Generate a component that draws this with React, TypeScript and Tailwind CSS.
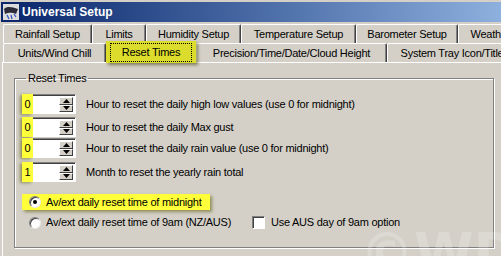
import React from 'react'

const row1 = [
  { label: 'Rainfall Setup', w: 89 },
  { label: 'Limits', w: 54 },
  { label: 'Humidity Setup', w: 95 },
  { label: 'Temperature Setup', w: 115 },
  { label: 'Barometer Setup', w: 102 },
  { label: 'Weather Station', w: 100 },
]

const spinners = [
  { value: '0', label: 'Hour to reset the daily high low values (use 0 for midnight)', mt: 'mt-[10px]' },
  { value: '0', label: 'Hour to reset the daily Max gust', mt: 'mt-[3px]' },
  { value: '0', label: 'Hour to reset the daily rain value (use 0 for midnight)', mt: 'mt-[1px]' },
  { value: '1', label: 'Month to reset the yearly rain total', mt: 'mt-[4px]' },
]

const Tab = ({ label, w }: { label: string; w: number }) => (
  <div
    className="h-[19px] shrink-0 flex items-center justify-center border-l border-t border-white border-r border-r-[#404040] rounded-t-[2px] shadow-[inset_-1px_0_0_#808080] whitespace-nowrap overflow-hidden"
    style={{ width: w }}
  >
    {label}
  </div>
)

const SpinBox = ({ value }: { value: string }) => (
  <div className="relative w-[54px] h-[20px] shrink-0 bg-white border border-t-[#808080] border-l-[#808080] border-b-white border-r-white shadow-[inset_1px_1px_0_#404040]">
    <div className="absolute -left-[1px] -top-[1px] w-[11px] h-[20px] bg-[#ffff3a] shadow-[-2px_1px_3px_rgba(90,90,0,0.55)] flex items-center justify-center">
      {value}
    </div>
    <div className="absolute right-[2px] top-[2px] w-[14px] h-[15px] flex flex-col">
      <div className="flex-1 bg-[#d4d0c8] border border-t-white border-l-white border-b-[#404040] border-r-[#404040] flex items-center justify-center">
        <svg width="7" height="4" viewBox="0 0 7 4"><path d="M3.5 0L7 4H0z" fill="#000" /></svg>
      </div>
      <div className="flex-1 bg-[#d4d0c8] border border-t-white border-l-white border-b-[#404040] border-r-[#404040] flex items-center justify-center">
        <svg width="7" height="4" viewBox="0 0 7 4"><path d="M0 0H7L3.5 4z" fill="#000" /></svg>
      </div>
    </div>
  </div>
)

const Radio = ({ checked }: { checked?: boolean }) => (
  <span className="w-[12px] h-[12px] shrink-0 rounded-full bg-white border border-t-[#808080] border-l-[#808080] border-b-[#e8e8e8] border-r-[#e8e8e8] shadow-[inset_1px_1px_0_#404040] flex items-center justify-center">
    {checked && <span className="w-[4px] h-[4px] rounded-full bg-black" />}
  </span>
)

export default function App() {
  return (
    <div
      className="relative w-[501px] h-[256px] overflow-hidden bg-[#d4d0c8] text-black text-[11px] leading-none tracking-[-0.25px] whitespace-nowrap"
      style={{ fontFamily: '"Liberation Sans", Arial, sans-serif' }}
    >
      {/* title bar */}
      <div className="mt-[2px] ml-[1px] h-[20px] bg-gradient-to-r from-[#0a246a] to-[#8eb0de] flex items-center gap-[3px] pl-[2px]">
        <svg width="16" height="16" viewBox="0 0 16 16">
          <rect width="16" height="16" fill="#dcdcdc" />
          <path d="M1 5C4 2 9 3 15 5L13 10C9 8 5 9 2 10z" fill="#2b2b3a" />
          <path d="M4 11l2 4M8 11l1 4M11 10l2 3" stroke="#3050c0" strokeWidth="1.2" />
        </svg>
        <span className="text-white font-bold text-[12px] tracking-normal">Universal Setup</span>
      </div>

      {/* tabs */}
      <div className="mt-[2px] pl-[3px] flex">
        {row1.map((t) => (
          <Tab key={t.label} label={t.label} w={t.w} />
        ))}
      </div>
      <div className="relative pl-[3px] flex h-[19px]">
        <Tab label="Units/Wind Chill" w={103} />
        <div className="relative z-10 -mt-[2px] w-[90px] h-[22px] shrink-0 bg-[#dcdc2c] shadow-[2px_2px_3px_rgba(60,60,0,0.55)] flex items-center justify-center">
          <span className="px-[11px] py-[3px] border border-dotted border-black">Reset Times</span>
        </div>
        <Tab label="Precision/Time/Date/Cloud Height" w={191} />
        <Tab label="System Tray Icon/Title" w={130} />
      </div>

      {/* page */}
      <div className="relative ml-[2px] h-[200px] border-t border-l border-white pl-[11px] pt-[10px]">
        <fieldset className="w-[480px] h-[175px] border border-[#808080] shadow-[inset_1px_1px_0_white,1px_1px_0_white] px-[7px]">
          <legend className="ml-[4px] px-[2px]">Reset Times</legend>
          {spinners.map((s, i) => (
            <div key={i} className={`${s.mt} flex items-center gap-[10px]`}>
              <SpinBox value={s.value} />
              <span>{s.label}</span>
            </div>
          ))}

          <div className="mt-[12px] w-[188px] h-[16px] bg-[#ffff3a] shadow-[2px_2px_3px_rgba(90,90,0,0.55)] flex items-center gap-[5px] pl-[7px]">
            <Radio checked />
            <span>Av/ext daily reset time of midnight</span>
          </div>

          <div className="mt-[6px] flex items-center">
            <div className="flex items-center gap-[5px] pl-[7px] w-[230px]">
              <Radio />
              <span>Av/ext daily reset time of 9am (NZ/AUS)</span>
            </div>
            <div className="flex items-center gap-[6px]">
              <span className="w-[13px] h-[13px] bg-white border border-t-[#808080] border-l-[#808080] border-b-white border-r-white shadow-[inset_1px_1px_0_#404040]" />
              <span>Use AUS day of 9am option</span>
            </div>
          </div>
        </fieldset>
      </div>

      <div
        className="absolute left-[360px] top-[226px] text-[54px] leading-none font-bold text-white/20 pointer-events-none tracking-normal"
        style={{ fontFamily: '"DejaVu Sans", sans-serif' }}
      >
        ©WDH
      </div>
    </div>
  )
}
